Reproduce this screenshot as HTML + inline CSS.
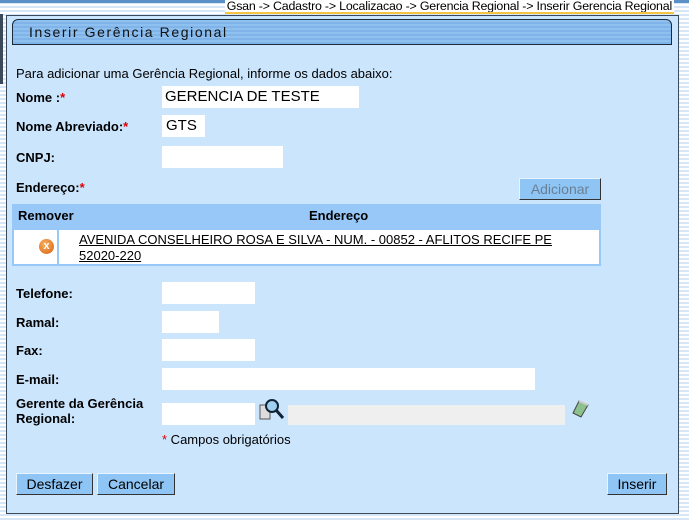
<!DOCTYPE html><html><head><style>
body{margin:0;width:689px;height:522px;overflow:hidden;font-family:"Liberation Sans",sans-serif;font-size:13px;color:#000;
background:repeating-linear-gradient(#fff 0,#fff 2px,#d6e6f7 2px,#d6e6f7 4px);position:relative}
.a{position:absolute}
.topbar{left:0;top:0;width:689px;height:3px;background:#5b8fc7}
.crumb{right:15px;top:0;font-size:12.4px;background:#fff;padding:0 2px;height:12px;line-height:12px;letter-spacing:-0.2px}
.crumb:after{content:"";position:absolute;left:0;right:0;bottom:-2px;height:2px;background:#f5c542}
.panel{left:6px;top:15px;width:673px;height:499px;background:#cbe5fd;border:1px solid #3a4a5a;box-sizing:border-box}
.hdr{left:12px;top:19px;width:660px;height:26px;box-sizing:border-box;border:1px solid #1c2a3a;border-radius:6px 6px 0 0;
background:repeating-linear-gradient(#8ec0f0 0,#8ec0f0 2px,#80b4e8 2px,#80b4e8 4px);font-size:14px;letter-spacing:1.6px;line-height:24px;padding-left:16px;color:#111}
.lb{font-weight:bold;font-size:13px;left:16px}
.r{color:#d00}
.in{background:#fff;height:22px;box-sizing:border-box;font-size:15px;line-height:22px;padding-left:4px}
.btn{background:#8ec5f5;border:1px solid;border-color:#e8f4ff #333 #333 #e8f4ff;height:22px;box-sizing:border-box;font-size:14px;line-height:20px;text-align:center}
</style></head><body>
<div class="a topbar"></div>
<div class="a" style="left:0;top:14px;width:3px;height:70px;background:#3a4a5a"></div>
<div class="a crumb">Gsan -&gt; Cadastro -&gt; Localizacao -&gt; Gerencia Regional -&gt; Inserir Gerencia Regional</div>
<div class="a panel"></div>
<div class="a hdr">Inserir Gerência Regional</div>
<div class="a" style="left:16px;top:66px">Para adicionar uma Gerência Regional, informe os dados abaixo:</div>
<div class="a lb" style="top:90px">Nome :<span class="r">*</span></div>
<div class="a in" style="left:162px;top:86px;width:197px;padding-left:3px">GERENCIA DE TESTE</div>
<div class="a lb" style="top:119px">Nome Abreviado:<span class="r">*</span></div>
<div class="a in" style="left:162px;top:115px;width:43px">GTS</div>
<div class="a lb" style="top:150px">CNPJ:</div>
<div class="a in" style="left:162px;top:146px;width:121px"></div>
<div class="a lb" style="top:180px">Endereço:<span class="r">*</span></div>
<div class="a btn" style="left:519px;top:178px;width:82px;color:#6a7f95">Adicionar</div>
<div class="a" style="left:12px;top:204px;width:589px;height:62px;background:#98c8f8"></div>
<div class="a lb" style="left:18px;top:208px;font-size:13px">Remover</div>
<div class="a lb" style="left:309px;top:208px;font-size:13px">Endereço</div>
<div class="a" style="left:14px;top:230px;width:43px;height:34px;background:#fff"></div>
<div class="a" style="left:59px;top:230px;width:540px;height:34px;background:#fff"></div>
<div class="a" style="left:39px;top:239px;width:15px;height:15px;border-radius:50%;background:radial-gradient(circle at 40% 35%,#f8b060,#d86010);color:#fff;font-size:11px;font-weight:bold;text-align:center;line-height:15px">x</div>
<div class="a" style="left:79px;top:232px;font-size:13px;line-height:16px;text-decoration:underline">AVENIDA CONSELHEIRO ROSA E SILVA - NUM. - 00852 - AFLITOS RECIFE PE<br>52020-220</div>
<div class="a lb" style="top:286px">Telefone:</div>
<div class="a in" style="left:162px;top:282px;width:93px"></div>
<div class="a lb" style="top:315px">Ramal:</div>
<div class="a in" style="left:162px;top:311px;width:57px"></div>
<div class="a lb" style="top:343px">Fax:</div>
<div class="a in" style="left:162px;top:339px;width:93px"></div>
<div class="a lb" style="top:372px">E-mail:</div>
<div class="a in" style="left:162px;top:368px;width:373px"></div>
<div class="a lb" style="top:396px;line-height:15px">Gerente da Gerência<br>Regional:</div>
<div class="a in" style="left:162px;top:403px;width:93px"></div>
<svg class="a" style="left:258px;top:397px" width="28" height="24"><rect x="2" y="8" width="10" height="14" fill="#ddd" stroke="#555"/><circle cx="14" cy="9" r="6" fill="#9fd0f0" stroke="#123" stroke-width="2"/><path d="M18 13l7 8" stroke="#123" stroke-width="3"/></svg>
<div class="a" style="left:288px;top:405px;width:277px;height:20px;background:#efefef"></div>
<svg class="a" style="left:570px;top:397px" width="22" height="22"><path d="M9 4l9 4-7 12-8-4z" fill="#8cc08c" stroke="#444"/><path d="M9 4l9 4" stroke="#ccc" stroke-width="2"/></svg>
<div class="a" style="left:162px;top:432px"><span class="r">*</span> Campos obrigatórios</div>
<div class="a btn" style="left:16px;top:473px;width:77px">Desfazer</div>
<div class="a btn" style="left:97px;top:473px;width:78px">Cancelar</div>
<div class="a btn" style="left:607px;top:473px;width:60px">Inserir</div>
</body></html>
